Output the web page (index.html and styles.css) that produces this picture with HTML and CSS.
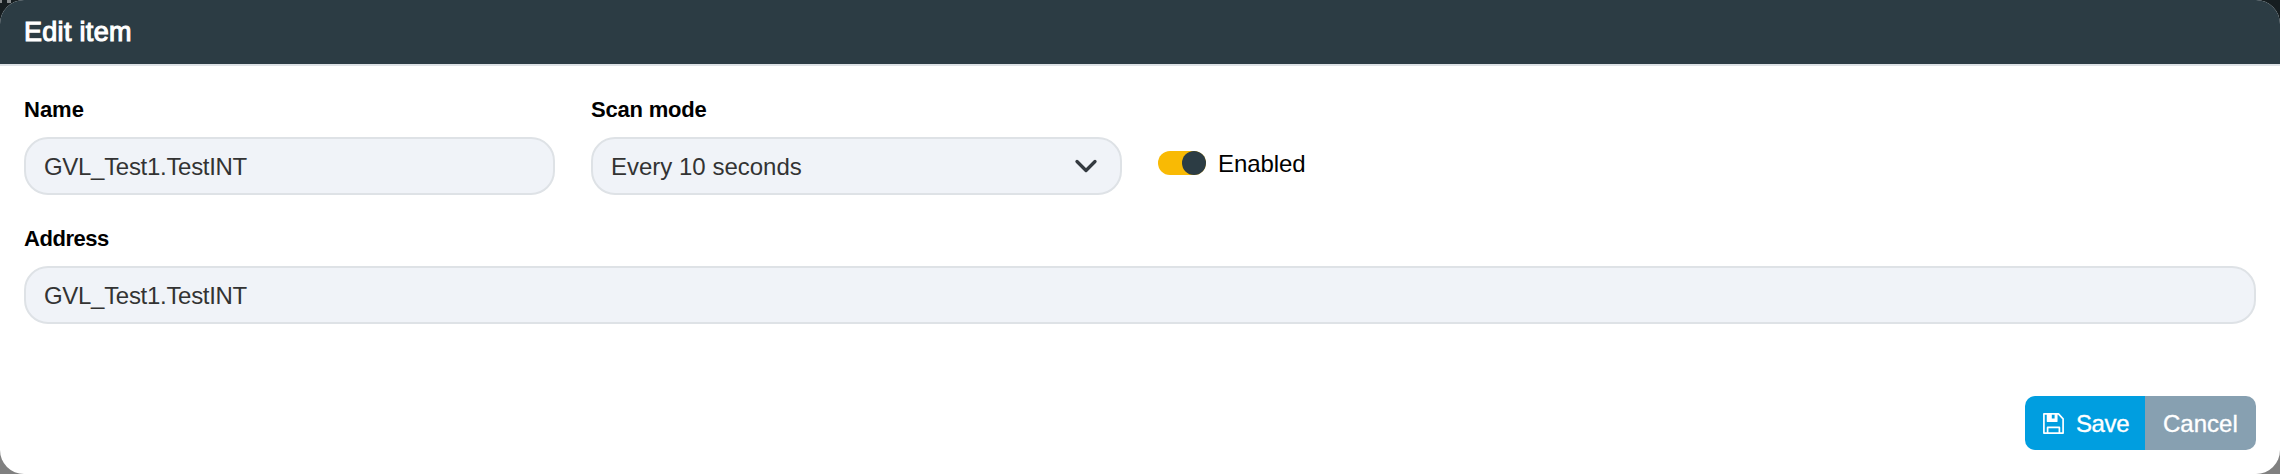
FILE: index.html
```
<!DOCTYPE html>
<html lang="en">
<head>
<meta charset="utf-8">
<title>Edit item</title>
<link rel="stylesheet" href="styles.css">
</head>
<body>
<div class="backdrop">
  <span class="speck speck-first"></span>
  <span class="speck speck-second"></span>
  <div class="modal">
    <header class="modal-header"><h1 class="modal-title">Edit item</h1></header>
    <main class="modal-body">
      <div class="row">
        <div class="field field-small">
          <div class="label">Name</div>
          <div class="control"><span class="value">GVL_Test1.TestINT</span></div>
        </div>
        <div class="field field-small">
          <div class="label label-scan">Scan mode</div>
          <div class="control">
            <span class="value value-scan">Every 10 seconds</span>
            <svg class="chevron" width="24" height="24" viewBox="0 0 16 16" fill="none" stroke="#343a40" stroke-width="2.2" stroke-linecap="round" stroke-linejoin="round"><path d="m2 5 6 6 6-6"/></svg>
          </div>
        </div>
        <div class="switch-group">
          <span class="switch"><span class="knob"></span></span>
          <span class="switch-label">Enabled</span>
        </div>
      </div>
      <div class="field">
        <div class="label label-address">Address</div>
        <div class="control"><span class="value">GVL_Test1.TestINT</span></div>
      </div>
      <div class="actions">
        <div class="button save">
          <svg class="disk" width="21" height="21" viewBox="0 0 21 21" fill="none" stroke="#fff" stroke-width="1.7" stroke-linejoin="round"><path d="M.9.9h14.6l4.6 4.9v14.3H.9zM13.7.9v7.3H4.6V.9M4.6 20v-5.6h11.8V20"/><path d="M4.6 1h4.2v4.6h2.8V1h2.1v7.2H4.6z" fill="#fff" stroke="none"/></svg>
          <span class="save-text">Save</span>
        </div>
        <div class="button cancel"><span class="cancel-text">Cancel</span></div>
      </div>
    </main>
  </div>
</div>
</body>
</html>
```
FILE: styles.css
```
* { box-sizing: border-box; }
body { margin: 0; font-family: "Liberation Sans", Arial, sans-serif; color: #000; }
.backdrop { position: relative; height: 474px; background: linear-gradient(#161d20 0 237px, #808080 237px); }
.speck { position: absolute; z-index: 1; top: 0; height: 3px; background: #85898b; }
.speck-first { left: 0; width: 2px; }
.speck-second { left: 7px; width: 4px; }
.modal { height: 474px; border-radius: 24px; overflow: hidden; background: #fff; }
.modal-header { height: 66px; padding: 14px 24px 0 24px; background: #2c3c44; border-bottom: 2px solid #dee2e6; }
.modal-title { margin: 0; color: #fff; font-size: 27px; font-weight: normal; line-height: 36px; -webkit-text-stroke: 1.1px #fff; letter-spacing: .3px; }
.modal-body { padding: 28px 24px 0; }
.row { display: flex; gap: 36px; height: 129px; }
.field-small { width: 531px; }
.label { height: 43px; font-size: 22px; font-weight: bold; line-height: 32px; }
.label-scan { letter-spacing: -.2px; }
.label-address { letter-spacing: -.45px; }
.control { height: 58px; display: flex; align-items: center; justify-content: space-between; padding: 0 22px 0 18px; border: 2px solid #dee2e6; border-radius: 24px; background: #f0f3f8; color: #333; }
.value { padding-top: 2px; font-size: 24px; line-height: 36px; letter-spacing: -.3px; }
.value-scan { letter-spacing: 0; }
.switch-group { display: flex; align-items: center; gap: 12px; height: 24px; margin-top: 57px; }
.switch { display: flex; justify-content: flex-end; width: 48px; height: 24px; border-radius: 12px; background: #f9ba04; }
.knob { width: 24px; height: 24px; border-radius: 50%; background: #2c3c44; }
.switch-label { padding-top: 2px; font-size: 24px; line-height: 36px; letter-spacing: -.1px; }
.actions { display: flex; justify-content: flex-end; margin-top: 72px; }
.button { display: flex; align-items: center; height: 54px; color: #fff; font-size: 24px; line-height: 36px; }
.save { width: 120px; padding-left: 18px; gap: 12px; border-radius: 10px 0 0 10px; background: #009ee0; }
.save-text, .cancel-text { padding-top: 2px; -webkit-text-stroke: .35px #fff; }
.save-text { letter-spacing: -.4px; }
.cancel { width: 111px; padding-left: 18px; border-radius: 0 10px 10px 0; background: #87a0b1; }
```
